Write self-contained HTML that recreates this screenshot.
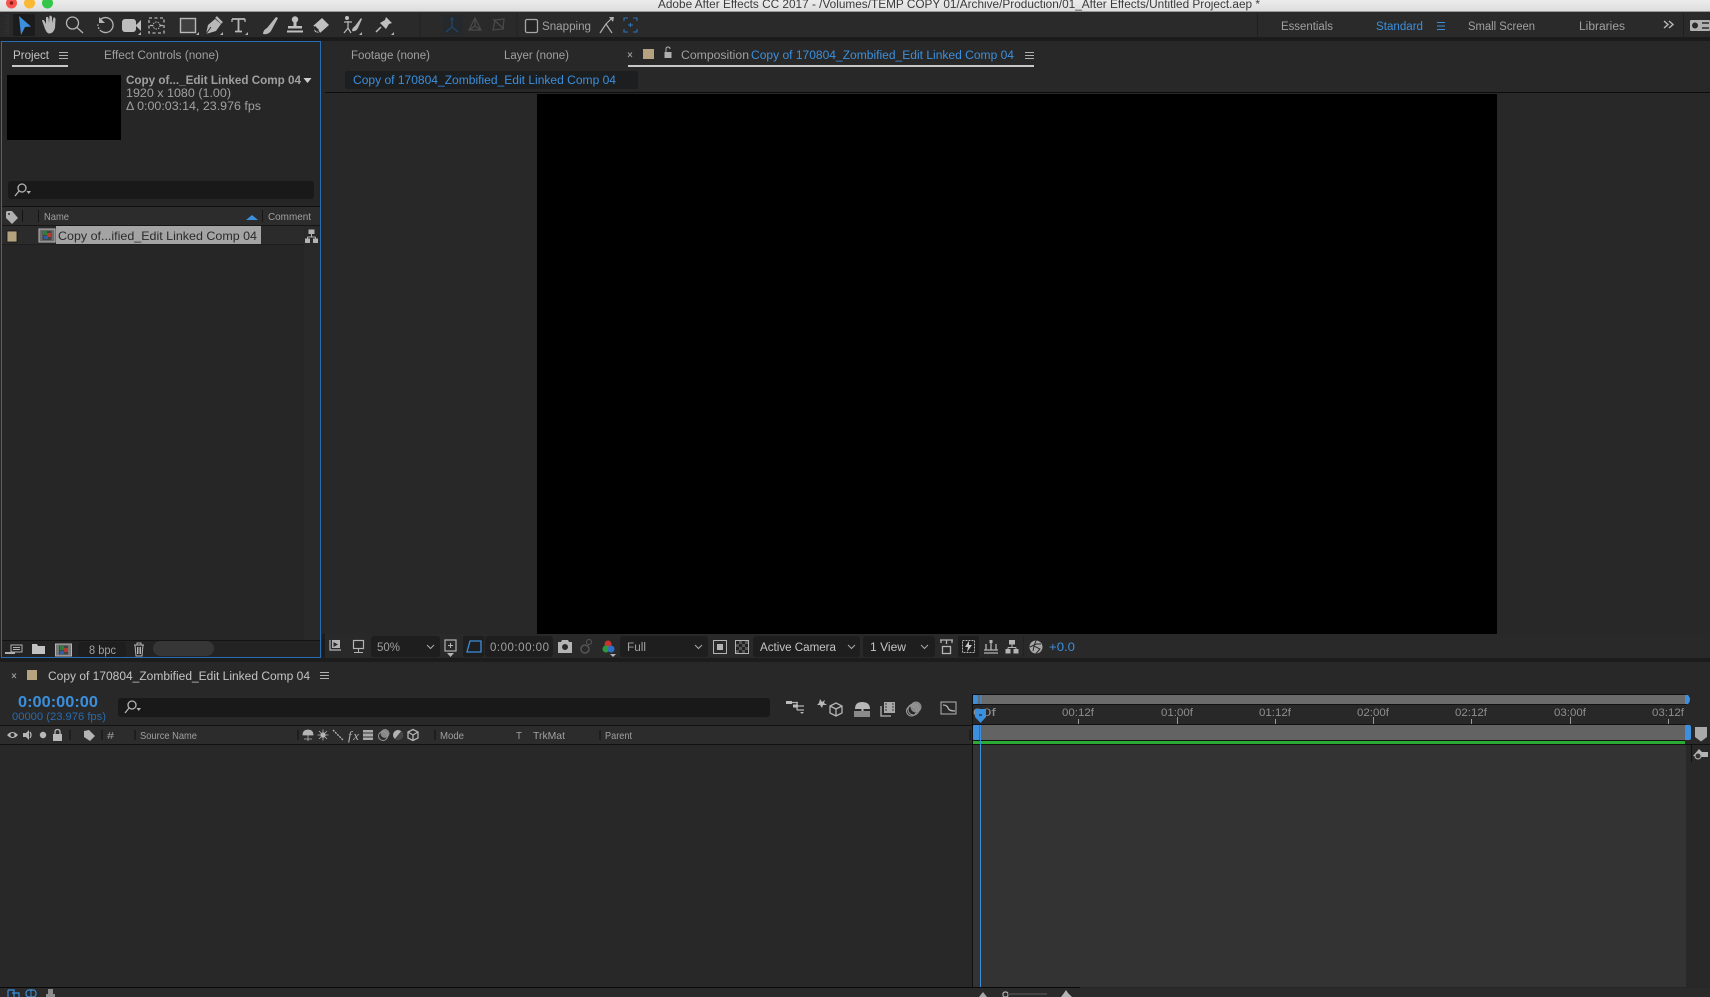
<!DOCTYPE html>
<html><head><meta charset="utf-8"><title>Adobe After Effects CC 2017</title>
<style>
html,body{margin:0;padding:0;background:#272727;width:1710px;height:997px;overflow:hidden}
svg{display:block;filter:blur(.35px)}
text{font-family:"Liberation Sans",sans-serif;font-size:11.5px;fill:#a0a0a0}
.b{fill:#3c8fdc}
.w{fill:#c4c4c4}
.i{fill:#b4b4b4}
.s{fill:none;stroke:#b4b4b4;stroke-width:1.3}
.sb{fill:none;stroke:#3c8fdc;stroke-width:1.3}
.l{fill:#151515}
.r text{fill:#8e8e8e;font-size:11px}
</style></head><body>
<svg width="1710" height="997" viewBox="0 0 1710 997" xmlns="http://www.w3.org/2000/svg">
<defs>
<linearGradient id="tb" x1="0" y1="0" x2="0" y2="1"><stop offset="0" stop-color="#ececec"/><stop offset="1" stop-color="#dcdcdc"/></linearGradient>
<g id="m"><path d="M0 .5H9M0 3.5H9M0 6.5H9" stroke="#b0b0b0" stroke-width="1" fill="none"/></g>
<path id="corner" d="M3 0V3H0Z" fill="#b4b4b4"/>
<g id="flow" fill="#b4b4b4"><rect x="3.500" y="0" width="6" height="4.500"/><path d="M6.500 4.500V7.500M2.500 7.500H10.500M2.500 7.500V9M10.500 7.500V9" fill="none" stroke="#b4b4b4"/><rect x="0" y="9" width="5" height="4.500"/><rect x="8" y="9" width="5" height="4.500"/></g>
</defs>
<rect width="1710" height="997" fill="#272727"/>

<!-- title bar -->
<rect width="1710" height="12" fill="url(#tb)"/>
<rect y="11" width="1710" height="1" fill="#9a9a9a"/>
<circle cx="11.500" cy="3" r="5.500" fill="#f8544e"/><circle cx="11.500" cy="3" r="1.800" fill="#8c1a15"/>
<circle cx="29.500" cy="3" r="5.500" fill="#fbb933"/>
<circle cx="47.500" cy="3" r="5.500" fill="#33c648"/>
<text x="658" y="8" textLength="602" lengthAdjust="spacingAndGlyphs" style="fill:#3a3a3a;font-size:11.500px">Adobe After Effects CC 2017 - /Volumes/TEMP COPY 01/Archive/Production/01_After Effects/Untitled Project.aep *</text>

<!-- toolbar -->
<rect y="12" width="1710" height="25" fill="#2a2a2a"/>
<rect y="37" width="1710" height="4" fill="#1b1b1b"/>
<path d="M6 15V35M8 15V35" stroke="#3a3a3a" stroke-width="1" stroke-dasharray="1 1"/>
<rect x="13" y="14" width="22" height="22" rx="2" fill="#1c1c1c"/>
<path d="M19 16L31 26.500L25 27L21 35Z" fill="#3c8fdc"/>
<path d="M44 26L42 20.500Q43 19 44.500 21L46 24L46 17.500Q47.500 16 48.500 18L49 23L49.500 16Q51 15 52 17L52 23L53.500 17.500Q55 17 55.500 19L55 28Q53 34 49 33.500Q46 33 44 26Z" fill="#b8b8b8"/>
<circle cx="72.500" cy="23" r="6" class="s"/><path d="M77 27.500L83 33" class="s" stroke-width="2"/>
<path d="M100 20A7.500 7.500 0 1 1 101 31" class="s"/><path d="M99 17V23H105Z" fill="#b4b4b4"/>
<path d="M101 31A7.500 7.500 0 0 1 98 24" class="s" stroke-dasharray="1.500 1.500"/>
<rect x="122" y="19" width="14" height="13" rx="3" fill="#bdbdbd"/><path d="M136 25L141 20V31L136 26Z" fill="#bdbdbd"/>
<use href="#corner" x="138" y="32"/>
<rect x="149" y="18" width="15" height="15" class="s" stroke-dasharray="3 2.500"/><circle cx="156.500" cy="25.500" r="3.500" fill="none" stroke="#b4b4b4" stroke-dasharray="1.500 1"/>
<path d="M153 25.500L150 25.500M160 25.500H163" class="s"/>
<rect x="180.500" y="18.500" width="15" height="14" fill="#3f3f3f" stroke="#b8b8b8" stroke-width="1.400"/>
<use href="#corner" x="196" y="32"/>
<path d="M206 34L208 25L215 19L221 24L216 31Z" fill="#b8b8b8"/><path d="M216 17L222 23" stroke="#b8b8b8" stroke-width="2.500"/><path d="M206 34L211 27" stroke="#2a2a2a"/>
<use href="#corner" x="220" y="32"/>
<path d="M232 19H245M238.500 19V31M235 31.500H242" fill="none" stroke="#b8b8b8" stroke-width="1.800"/><path d="M232 19V22M245 19V22" stroke="#b8b8b8" stroke-width="1.300"/>
<use href="#corner" x="245" y="32"/>
<path d="M263 34Q263 30 267 28L276 17L278 18L271 31Q268 35 263 34Z" fill="#b8b8b8"/>
<circle cx="295" cy="19.500" r="3.200" fill="#c0c0c0"/><rect x="293.500" y="21" width="3" height="6" fill="#c0c0c0"/><rect x="288" y="26" width="14" height="2.500" fill="#c0c0c0"/><rect x="287" y="30.500" width="16" height="2" fill="#c0c0c0"/>
<path d="M313 26L322 18L329 25L320 33L315 32Z" fill="#c0c0c0"/><path d="M314 27L318 31" stroke="#2a2a2a" stroke-width="3"/><path d="M313 26L320 33" stroke="#2a2a2a" stroke-width="1"/>
<circle cx="347" cy="18" r="2" fill="#c0c0c0"/><path d="M344 22H352M348 21V28L344 33M348 28L351 33" class="s" stroke-width="1.800"/><path d="M352 31Q352 28 355 26L361 18L362 19L358 28Q356 32 352 31Z" fill="#b8b8b8"/><use href="#corner" x="359" y="32"/>
<path d="M386 17L392 23L389 24L386 29L380 23L385 20Z" fill="#c0c0c0"/><path d="M381 27L376 32" stroke="#c0c0c0" stroke-width="1.500"/><use href="#corner" x="391" y="32"/>
<rect x="443" y="15" width="20" height="20" rx="2" fill="#26292c"/>
<path d="M452 19V27M452 27L446 32M452 27L458 32" fill="none" stroke="#1f4568" stroke-width="1.400"/><circle cx="452" cy="19" r="1.500" fill="#1f4568"/>
<path d="M475 18L469 30H481ZM475 18V26M469 30L475 26L481 30" fill="none" stroke="#4a4a4a" stroke-width="1.200"/>
<path d="M493 19L504 29M504 19L495 20L493 30L503 29Z" fill="none" stroke="#4a4a4a" stroke-width="1.200"/>
<path d="M420 13V37" stroke="#232323"/><path d="M517 13V37" stroke="#232323"/>
<rect x="525.500" y="19.500" width="12" height="13" rx="1.500" fill="#232323" stroke="#a8a8a8" stroke-width="1.300"/>
<text x="542" y="30" textLength="49" lengthAdjust="spacingAndGlyphs">Snapping</text>
<path d="M600 33L606 24L612 33M606 24L612 18" fill="none" stroke="#b0b0b0" stroke-width="1.200"/><path d="M609 17L614 17L613 22Z" fill="#b0b0b0"/>
<g fill="none" stroke="#2f74b5" stroke-width="1.100"><path d="M624 21V18H628M633 18H637V21M637 29V32H633M628 32H624V29"/><path d="M628 25H633M630.500 23V27"/></g>
<rect x="1257" y="13" width="1" height="24" fill="#1f1f1f"/>
<text x="1281" y="30" textLength="52" lengthAdjust="spacingAndGlyphs">Essentials</text>
<text x="1376" y="30" textLength="47" lengthAdjust="spacingAndGlyphs" class="b">Standard</text>
<path d="M1437 22.500H1445M1437 26H1445M1437 29.500H1445" stroke="#3c8fdc" fill="none"/>
<text x="1468" y="30" textLength="67" lengthAdjust="spacingAndGlyphs">Small Screen</text>
<text x="1579" y="30" textLength="46" lengthAdjust="spacingAndGlyphs">Libraries</text>
<path d="M1664 21L1668 24.500L1664 28M1669 21L1673 24.500L1669 28" fill="none" stroke="#b8b8b8" stroke-width="1.400"/>
<rect x="1683" y="13" width="1" height="24" fill="#1f1f1f"/>
<rect x="1690" y="20" width="20" height="11" rx="1" fill="#b0b0b0"/><circle cx="1695" cy="25.500" r="3" fill="#2a2a2a"/><path d="M1702 23H1709M1702 28H1709" stroke="#2a2a2a" stroke-width="1.500"/>

<!-- project panel -->
<rect x="1" y="41" width="320" height="616" fill="#262626"/>
<rect x="1.500" y="41.500" width="319" height="616" fill="none" stroke="#2a6cb0" stroke-width="1"/>
<text x="13" y="59" textLength="36" lengthAdjust="spacingAndGlyphs" class="w">Project</text>
<use href="#m" x="59" y="52"/>
<rect x="12" y="65" width="56" height="2" fill="#c8c8c8"/>
<text x="104" y="59" textLength="115" lengthAdjust="spacingAndGlyphs">Effect Controls (none)</text>
<rect x="7" y="75" width="114" height="65" fill="#000"/>
<text x="126" y="84" textLength="175" lengthAdjust="spacingAndGlyphs" style="font-weight:bold;font-size:11.500px">Copy of..._Edit Linked Comp 04</text>
<path d="M303.500 78H311.500L307.500 83Z" fill="#d0d0d0"/>
<text x="126" y="97" textLength="105" lengthAdjust="spacingAndGlyphs">1920 x 1080 (1.00)</text>
<text x="126" y="110" textLength="135" lengthAdjust="spacingAndGlyphs">Δ 0:00:03:14, 23.976 fps</text>
<rect x="8" y="181" width="306" height="18" rx="3" fill="#191919"/>
<circle cx="22" cy="188" r="4" class="s"/><path d="M19 191L15 196" class="s"/><path d="M26.500 191H31L28.700 194Z" fill="#b4b4b4"/>
<rect x="2" y="206" width="318" height="1" fill="#111"/>
<rect x="2" y="207" width="318" height="18" fill="#2c2c2c"/>
<rect x="2" y="225" width="318" height="1" fill="#161616"/>
<path d="M6 212L6 218L12 224L18 218L12 211L7 211Z" fill="#b0b0b0"/><circle cx="9" cy="214" r="1" fill="#2c2c2c"/>
<path d="M22.500 210V222M38.500 210V222M262.500 210V222" stroke="#141414"/>
<text x="44" y="220" textLength="25" lengthAdjust="spacingAndGlyphs" style="font-size:10.500px">Name</text>
<path d="M246 220L252 215L258 220Z" fill="#3c8fdc"/>
<text x="268" y="220" textLength="43" lengthAdjust="spacingAndGlyphs" style="font-size:10.500px">Comment</text>
<rect x="304" y="226" width="16" height="414" fill="#292929"/>
<rect x="2" y="244" width="302" height="1" fill="#1e1e1e"/>
<rect x="2" y="226" width="302" height="18" fill="#2b2b2b"/>
<rect x="7" y="231" width="10" height="11" fill="#b5a27f" stroke="#151515" stroke-width=".8"/>
<rect x="39" y="229" width="16" height="13" fill="#6a6a6a" stroke="#bbb"/>
<rect x="42.500" y="231" width="9" height="9" fill="#444"/>
<rect x="43" y="231" width="4" height="4" fill="#2f7f3a"/><rect x="47" y="233" width="4" height="4" fill="#b53a2f"/><rect x="44" y="236" width="4" height="3" fill="#2d5fa8"/>
<rect x="56" y="226" width="205" height="18" fill="#a4a4a4"/>
<text x="58" y="240" textLength="199" lengthAdjust="spacingAndGlyphs" style="fill:#2a2a2a;font-size:12px">Copy of...ified_Edit Linked Comp 04</text>
<use href="#flow" x="305" y="229.500"/>
<rect x="2" y="640" width="318" height="1" fill="#141414"/>
<rect x="2" y="641" width="318" height="16" fill="#232323"/>
<g fill="#b0b0b0"><rect x="11" y="645" width="11" height="7" fill="none" stroke="#b0b0b0"/><path d="M5 652H15V654H5ZM13 647H20V648H13ZM13 649H20V650H13Z"/></g>
<path d="M32 644H37L38 646H45V654H32Z" fill="#c2c2c2"/>
<rect x="55.500" y="644" width="16" height="12" fill="#777" stroke="#b4b4b4"/><rect x="59" y="645.500" width="9" height="9" fill="#444"/><rect x="60" y="646" width="4" height="4" fill="#2f7f3a"/><rect x="64" y="648" width="4" height="4" fill="#b53a2f"/><rect x="60" y="651" width="4" height="3" fill="#2d5fa8"/>
<rect x="78" y="642" width="48" height="15" rx="3" fill="#1e1e1e"/>
<text x="89" y="654" textLength="27" lengthAdjust="spacingAndGlyphs">8 bpc</text>
<path d="M134 645H144M137 645V643H141V645M135 645L136 656H142L143 645M137.500 647V654M139 647V654M140.500 647V654" fill="none" stroke="#b4b4b4"/>
<rect x="153" y="641" width="61" height="15" rx="7.500" fill="#363636"/>

<!-- composition panel -->
<rect x="325" y="41" width="1385" height="593" fill="#282828"/>
<text x="351" y="59" textLength="79" lengthAdjust="spacingAndGlyphs">Footage (none)</text>
<text x="504" y="59" textLength="65" lengthAdjust="spacingAndGlyphs">Layer (none)</text>
<path d="M628 52.500L632 57M632 52.500L628 57" stroke="#999" fill="none"/>
<rect x="643" y="49" width="11" height="10" fill="#b5a27f"/>
<rect x="664.500" y="52" width="7" height="6" fill="#b0b0b0"/><path d="M666 52V49Q666 47 668 47Q670 47 670 49" fill="none" stroke="#b0b0b0"/>
<text x="681" y="59" textLength="68" lengthAdjust="spacingAndGlyphs">Composition</text>
<text x="751" y="59" textLength="263" lengthAdjust="spacingAndGlyphs" class="b">Copy of 170804_Zombified_Edit Linked Comp 04</text>
<use href="#m" x="1025" y="52"/>
<rect x="628" y="65" width="406" height="2" fill="#c8c8c8"/>
<rect x="345" y="71" width="293" height="18" rx="2" fill="#1c1e20"/>
<text x="353" y="84" textLength="263" lengthAdjust="spacingAndGlyphs" class="b">Copy of 170804_Zombified_Edit Linked Comp 04</text>
<rect x="325" y="92" width="1385" height="1" fill="#0c0c0c"/>
<rect x="537" y="94" width="960" height="540" fill="#000"/>

<!-- viewer toolbar -->
<rect x="325" y="634" width="1385" height="24" fill="#292929"/>
<rect x="0" y="658" width="1710" height="4" fill="#1c1c1c"/>
<rect x="1" y="657" width="320" height="1" fill="#2a6cb0"/>
<rect x="322" y="634" width="3" height="28" fill="#1c1c1c"/>
<g fill="#b4b4b4"><rect x="332" y="640" width="8" height="8"/><path d="M330 640V650H341" fill="none" stroke="#b4b4b4" stroke-width="1.200"/><path d="M333.500 642L338 644.500L333.500 647Z" fill="#292929"/></g>
<rect x="353.500" y="640.500" width="10" height="8" fill="none" stroke="#b4b4b4" stroke-width="1.200"/><path d="M358.500 649V652M354 652.500H363" stroke="#b4b4b4"/>
<g fill="#1e1e1e"><rect x="371" y="636" width="69" height="21" rx="3"/><rect x="463" y="636" width="21" height="21" rx="2"/><rect x="485" y="636" width="68" height="21" rx="3"/><rect x="620" y="636" width="88" height="21" rx="3"/><rect x="753" y="636" width="107" height="21" rx="3"/><rect x="863" y="636" width="72" height="21" rx="3"/><rect x="958" y="636" width="21" height="21" rx="2"/></g>
<text x="377" y="651" textLength="23" lengthAdjust="spacingAndGlyphs">50%</text>
<path d="M427 645L430.500 648.500L434 645M695 645L698.500 648.500L702 645M848 645L851.500 648.500L855 645M921 645L924.500 648.500L928 645" fill="none" stroke="#a8a8a8"/>
<rect x="445" y="640" width="11" height="11" fill="none" stroke="#b4b4b4" stroke-width="1.200"/><path d="M450.500 643V648M448 645.500H453" stroke="#b4b4b4"/><path d="M447 653H454L450.500 657Z" fill="#b4b4b4"/>
<path d="M467 652L470 641H481V652Z" fill="none" stroke="#3c8fdc" stroke-width="1.300"/>
<text x="490" y="651" textLength="59">0:00:00:00</text>
<path d="M558 642H561L562 640H568L569 642H572V653H558Z" fill="#b4b4b4"/><circle cx="565" cy="647" r="3" fill="#292929"/>
<circle cx="585" cy="649" r="4" fill="none" stroke="#555" stroke-width="1.500"/><circle cx="589" cy="642" r="2.500" fill="none" stroke="#555"/>
<circle cx="608" cy="644" r="3.500" fill="#c5352c"/><circle cx="606" cy="649" r="3.500" fill="#2c9a3a"/><circle cx="611" cy="649" r="3.500" fill="#2f6fc4"/><path d="M610 654H616L613 657Z" fill="#b4b4b4"/>
<text x="627" y="651" textLength="19" lengthAdjust="spacingAndGlyphs">Full</text>
<rect x="713.500" y="640.500" width="13" height="13" fill="none" stroke="#b4b4b4"/><rect x="717" y="644" width="6" height="6" fill="#b4b4b4"/>
<rect x="735.500" y="640.500" width="13" height="13" fill="#555" stroke="#b4b4b4"/><path d="M736 641h3v3h-3zM742 641h3v3h-3zM739 644h3v3h-3zM745 644h3v3h-3zM736 647h3v3h-3zM742 647h3v3h-3zM739 650h3v3h-3zM745 650h3v3h-3z" fill="#222"/>
<text x="760" y="651" textLength="76" lengthAdjust="spacingAndGlyphs" class="w">Active Camera</text>
<text x="870" y="651" textLength="36" lengthAdjust="spacingAndGlyphs" class="w">1 View</text>
<path d="M940 640H953M946.500 640V644M941 640V643M952 640V643" class="s"/><rect x="942.500" y="646.500" width="8" height="7" class="s"/>
<rect x="962.500" y="640.500" width="12" height="12" fill="none" stroke="#b4b4b4" stroke-dasharray="2 1"/><path d="M969 641L965 647H968L967 652L972 645H969Z" fill="#c8c8c8"/>
<path d="M991 640V650M986 644V650M996 644V650M984 650H998M984 653H998" class="s"/><rect x="989.500" y="640" width="3" height="3" fill="#b4b4b4"/>
<use href="#flow" x="1005.500" y="640"/>
<rect x="1023" y="636" width="1" height="21" fill="#222"/>
<circle cx="1036" cy="647" r="6.500" fill="#a8a8a8"/><path d="M1036 640.500L1034 646L1040 649L1036 653.500M1030 647L1036 644L1041 644M1033 651L1034 646" stroke="#292929" stroke-width="1" fill="none"/>
<text x="1049" y="651" textLength="26" lengthAdjust="spacingAndGlyphs" class="b">+0.0</text>

<!-- timeline header -->
<rect x="0" y="662" width="1710" height="325" fill="#282828"/>
<path d="M12 673.500L16 678M16 673.500L12 678" stroke="#999" fill="none"/>
<rect x="27" y="670" width="10" height="10" fill="#b5a27f"/>
<text x="48" y="680" textLength="262" lengthAdjust="spacingAndGlyphs" class="w">Copy of 170804_Zombified_Edit Linked Comp 04</text>
<use href="#m" x="320" y="672"/>
<text x="18" y="707" textLength="80" lengthAdjust="spacingAndGlyphs" class="b" style="font-weight:bold;font-size:15.500px">0:00:00:00</text>
<text x="12" y="720" textLength="94" lengthAdjust="spacingAndGlyphs" style="fill:#2a6bad;font-size:11px">00000 (23.976 fps)</text>
<rect x="118" y="698" width="652" height="19" rx="3" fill="#191919"/>
<circle cx="132" cy="705" r="4" class="s"/><path d="M129 708L125 713" class="s"/><path d="M136.500 708H141L138.700 711Z" fill="#b4b4b4"/>
<path d="M787 702.500H793M793 702.500H798M797 706H804M797 710H804M797 702.500V710" class="s" stroke-width="1.500"/><rect x="786" y="701" width="6" height="3" fill="#bbb"/><rect x="793" y="704.500" width="5" height="3" fill="#bbb"/><path d="M800 712H804L802 714Z" fill="#b4b4b4"/>
<path d="M820 699L822 702L825 700L824 703L827 705L823 705L822 708L820 705L817 705L819 703Z" fill="#b8b8b8"/>
<path d="M830 706L836 703L842 706V713L836 716L830 713ZM830 706L836 709L842 706M836 709V716" class="s"/>
<path d="M855 709Q855 702 862 702Q870 702 870 709Z" fill="#b8b8b8"/><rect x="861.500" y="709" width="2" height="4" fill="#b8b8b8"/><rect x="854" y="711" width="16" height="6" fill="#8a8a8a"/>
<rect x="884" y="702" width="11" height="11" fill="#a8a8a8"/><path d="M881 706V716H891" class="s"/><path d="M885 704H887M885 707H887M885 710H887M892 704H894M892 707H894M892 710H894" stroke="#333"/>
<circle cx="916" cy="707" r="5.500" fill="#8a8a8a"/><circle cx="913.500" cy="709.500" r="5.500" fill="none" stroke="#999"/><circle cx="911.500" cy="711" r="5" fill="none" stroke="#999"/>
<rect x="941" y="702" width="15" height="12" fill="none" stroke="#b4b4b4"/><path d="M943 705Q947 705 948 708T955 711" class="s"/>

<!-- timeline columns -->
<rect x="0" y="725" width="972" height="1" fill="#111"/>
<rect x="0" y="726" width="972" height="18" fill="#2c2c2c"/>
<rect x="0" y="744" width="972" height="1" fill="#121212"/>
<path d="M7 735Q12.500 729 18 735Q12.500 741 7 735Z" fill="#b8b8b8"/><circle cx="12.500" cy="735" r="2" fill="#2c2c2c"/>
<path d="M23 733H26L29 730V740L26 737H23Z" fill="#b4b4b4"/><path d="M30 732Q32 735 30 738" class="s"/>
<circle cx="43" cy="735" r="3.200" fill="#b8b8b8"/>
<rect x="53" y="734" width="9" height="7" fill="#b8b8b8"/><path d="M55 734V732Q55 729.500 57.500 729.500Q60 729.500 60 732V734" class="s"/>
<path d="M70 730V740M102 730V740M135 730V740M298 730V740M435 730V740M600 730V740M970 730V740" stroke="#111"/>
<path d="M84 731L84 737L90 741L95 736L89 730Z" fill="#b4b4b4"/>
<text x="107" y="739" textLength="7" lengthAdjust="spacingAndGlyphs" style="font-size:10.500px">#</text>
<text x="140" y="739" textLength="57" lengthAdjust="spacingAndGlyphs" style="font-size:10.500px">Source Name</text>
<path d="M303 735Q303 730 308 730Q313 730 313 735ZM308 735V741M304 739H312" fill="#b4b4b4" stroke="#b4b4b4" stroke-width=".8"/>
<circle cx="323" cy="735" r="2.600" fill="#b4b4b4"/><path d="M323 729.500V740.500M317.500 735H328.500M319 731L327 739M327 731L319 739" stroke="#b4b4b4" stroke-width=".8"/>
<path d="M333 730L343 740" stroke="#b4b4b4" stroke-width="1.300" stroke-dasharray="2 1"/>
<text x="348" y="740" style="font-family:'Liberation Serif',serif;font-style:italic;font-size:13px;fill:#b4b4b4" textLength="11">fx</text>
<rect x="363" y="730" width="10" height="10" fill="#aaa"/><path d="M363 733H373M363 737H373" stroke="#333"/>
<circle cx="385" cy="733.500" r="4.500" fill="#888"/><circle cx="383" cy="736" r="4.500" fill="none" stroke="#999"/>
<circle cx="398" cy="735" r="5" fill="#b4b4b4"/><path d="M398 730A5 5 0 0 1 398 740Z" fill="#444" transform="rotate(40 398 735)"/>
<path d="M408 732L413 729.500L418 732V738L413 740.500L408 738ZM408 732L413 735L418 732M413 735V740.500" class="s" stroke-width="1"/>
<text x="440" y="739" textLength="24" lengthAdjust="spacingAndGlyphs" style="font-size:10.500px">Mode</text>
<text x="516" y="739" textLength="6" lengthAdjust="spacingAndGlyphs" style="font-size:10.500px">T</text>
<text x="533" y="739" textLength="32" lengthAdjust="spacingAndGlyphs" style="font-size:10.500px">TrkMat</text>
<text x="605" y="739" textLength="27" lengthAdjust="spacingAndGlyphs" style="font-size:10.500px">Parent</text>

<!-- timeline graph -->
<rect x="972" y="694" width="1" height="293" fill="#0f0f0f"/>
<rect x="973" y="745" width="713" height="242" fill="#333"/>
<rect x="973" y="694" width="713" height="1" fill="#111"/>
<rect x="973" y="695" width="713" height="9" fill="#6b6b6b"/>
<rect x="973" y="704" width="713" height="1" fill="#111"/>
<rect x="973" y="705" width="713" height="19" fill="#282828"/>
<rect x="973" y="724" width="713" height="1" fill="#111"/>
<rect x="973" y="725" width="712" height="15" fill="#636363"/>
<rect x="973" y="740" width="712" height="1" fill="#141414"/>
<rect x="973" y="741" width="712" height="3" fill="#2bab35"/>
<rect x="973" y="744" width="713" height="1" fill="#111"/>
<path d="M973 695H977Q979 699.500 977 704H973Z" fill="#3c8fdc"/><rect x="980" y="695" width="1.500" height="9" fill="#3c8fdc" opacity=".7"/>
<path d="M1685 695H1688Q1692 699.500 1688 704H1685Z" fill="#3c8fdc"/>
<path d="M975 725H979V740H975Q973 740 973 738V727Q973 725 975 725Z" fill="#3c8fdc"/>
<path d="M1685 725H1689Q1691 725 1691 727V738Q1691 740 1689 740H1685Z" fill="#3c8fdc"/>
<g class="r">
<text x="973" y="716" textLength="23" lengthAdjust="spacingAndGlyphs">00f</text>
<text x="1062" y="716" textLength="32" lengthAdjust="spacingAndGlyphs">00:12f</text>
<text x="1161" y="716" textLength="32" lengthAdjust="spacingAndGlyphs">01:00f</text>
<text x="1259" y="716" textLength="32" lengthAdjust="spacingAndGlyphs">01:12f</text>
<text x="1357" y="716" textLength="32" lengthAdjust="spacingAndGlyphs">02:00f</text>
<text x="1455" y="716" textLength="32" lengthAdjust="spacingAndGlyphs">02:12f</text>
<text x="1554" y="716" textLength="32" lengthAdjust="spacingAndGlyphs">03:00f</text>
<text x="1652" y="716" textLength="32" lengthAdjust="spacingAndGlyphs">03:12f</text>
</g>
<path d="M1078.500 719V724M1177.500 717V724M1275.500 719V724M1373.500 717V724M1471.500 719V724M1570.500 717V724M1668.500 719V724" stroke="#9a9a9a"/>
<rect x="980" y="725" width="1" height="262" fill="#3c8fdc"/>
<path d="M975 710Q975 709 976 709H985Q986 709 986 710V717L980.500 723L975 717Z" fill="#3c8fdc"/><path d="M979 715H982" stroke="#111"/>
<path d="M1695 727H1707V737L1701 741.500L1695 737Z" fill="#a9a9a9"/>
<rect x="1686" y="744" width="24" height="1" fill="#111"/>
<rect x="1691" y="745" width="1" height="17" fill="#111"/>
<path d="M1693 756L1699 749L1702 752H1708V757H1702Z" fill="#b4b4b4"/><circle cx="1698" cy="756" r="3" fill="#333" stroke="#b4b4b4"/>

<!-- bottom bar -->
<rect x="0" y="987" width="1080" height="1" fill="#0a0a0a"/>
<rect x="0" y="988" width="1710" height="9" fill="#2a2a2a"/>
<path d="M8 990V997M8 990H14V997M12 993H19V997" fill="none" stroke="#3c8fdc" stroke-width="1.200"/>
<rect x="26" y="990" width="10" height="7" rx="3" fill="none" stroke="#3c8fdc" stroke-width="1.200"/><path d="M31 989V997" stroke="#3c8fdc"/>
<path d="M48 989H53V994H55V997H46V994H48Z" fill="#8c8c8c"/>
<path d="M979 997L983 992L987 997Z" fill="#a8a8a8"/>
<rect x="1003" y="992" width="5" height="5" rx="2" fill="none" stroke="#b4b4b4" stroke-width="1.200"/>
<rect x="1008" y="993" width="39" height="2" fill="#444"/>
<path d="M1061 997L1064 993L1066 990L1068 993L1072 997Z" fill="#b4b4b4"/>
</svg>
</body></html>
